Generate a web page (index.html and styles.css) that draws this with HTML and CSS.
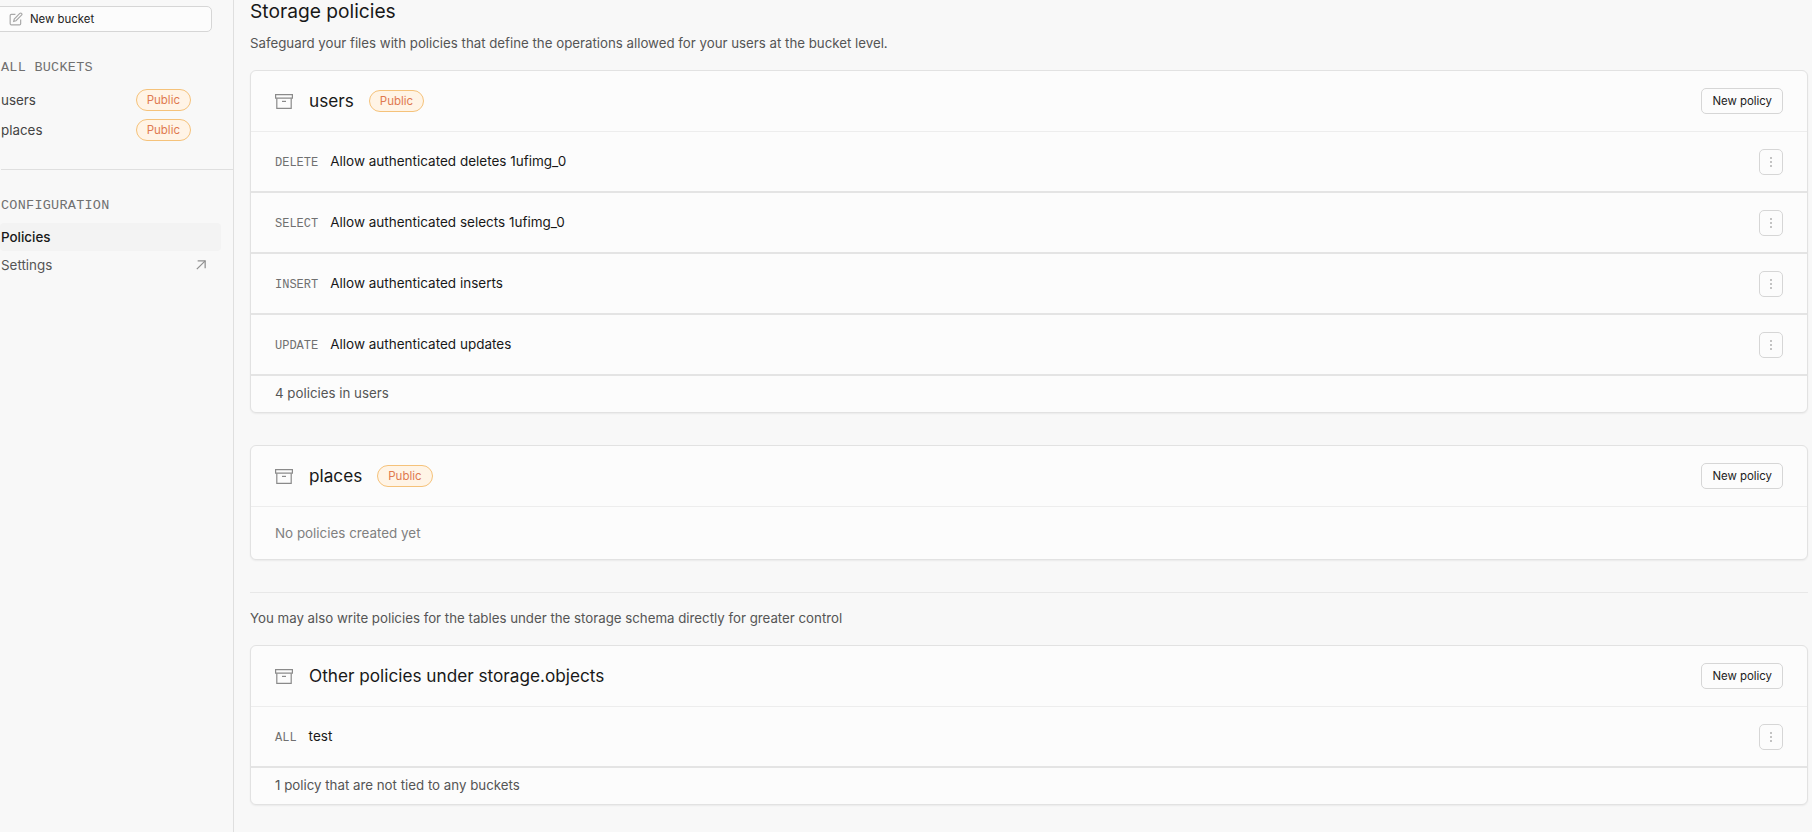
FILE: index.html
```html
<!DOCTYPE html>
<html lang="en">
<head>
<meta charset="utf-8">
<title>Storage policies</title>
<link rel="stylesheet" href="styles.css">
</head>
<body>
<div class="app">
  <aside class="sidebar">
    <button class="new-bucket">
      <svg class="ico-edit" viewBox="0 0 24 24" width="14" height="14"><path d="M11 4H4a2 2 0 0 0-2 2v14a2 2 0 0 0 2 2h14a2 2 0 0 0 2-2v-7"/><path d="M18.5 2.5a2.12 2.12 0 0 1 3 3L12 15l-4 1 1-4 9.5-9.5z"/></svg>
      <span>New bucket</span>
    </button>
    <div class="side-group buckets">
      <h3 class="side-title">ALL BUCKETS</h3>
      <div class="bucket-row"><span>users</span><span class="badge">Public</span></div>
      <div class="bucket-row"><span>places</span><span class="badge">Public</span></div>
    </div>
    <div class="side-group config">
      <h3 class="side-title">CONFIGURATION</h3>
      <div class="nav-item active">Policies</div>
      <div class="nav-item">Settings
        <svg class="ico-arrow" viewBox="0 0 24 24" width="20" height="20"><path d="M7 17 17 7"/><path d="M8 7h9v9"/></svg>
      </div>
    </div>
  </aside>
  <main class="main">
    <h1 class="title">Storage policies</h1>
    <p class="subtitle">Safeguard your files with policies that define the operations allowed for your users at the bucket level.</p>

    <section class="card">
      <header class="card-head">
        <svg class="ico-box" viewBox="0 0 18 15" width="18" height="15"><path d="M.6.6h16.8v3.6H.6z"/><path d="M1.8 4.2v10.2h14.4V4.2"/><path d="M7 7.4h4"/></svg>
        <span class="card-name">users</span><span class="badge">Public</span>
        <button class="btn">New policy</button>
      </header>
      <div class="row"><code class="op">DELETE</code><span class="pname">Allow authenticated deletes 1ufimg_0</span><button class="more"><svg viewBox="0 0 4 14" width="4" height="14"><circle cx="2" cy="3" r="1"/><circle cx="2" cy="7" r="1"/><circle cx="2" cy="11" r="1"/></svg></button></div>
      <div class="row"><code class="op">SELECT</code><span class="pname">Allow authenticated selects 1ufimg_0</span><button class="more"><svg viewBox="0 0 4 14" width="4" height="14"><circle cx="2" cy="3" r="1"/><circle cx="2" cy="7" r="1"/><circle cx="2" cy="11" r="1"/></svg></button></div>
      <div class="row"><code class="op">INSERT</code><span class="pname">Allow authenticated inserts</span><button class="more"><svg viewBox="0 0 4 14" width="4" height="14"><circle cx="2" cy="3" r="1"/><circle cx="2" cy="7" r="1"/><circle cx="2" cy="11" r="1"/></svg></button></div>
      <div class="row"><code class="op">UPDATE</code><span class="pname">Allow authenticated updates</span><button class="more"><svg viewBox="0 0 4 14" width="4" height="14"><circle cx="2" cy="3" r="1"/><circle cx="2" cy="7" r="1"/><circle cx="2" cy="11" r="1"/></svg></button></div>
      <footer class="card-foot">4 policies in users</footer>
    </section>

    <section class="card second">
      <header class="card-head">
        <svg class="ico-box" viewBox="0 0 18 15" width="18" height="15"><path d="M.6.6h16.8v3.6H.6z"/><path d="M1.8 4.2v10.2h14.4V4.2"/><path d="M7 7.4h4"/></svg>
        <span class="card-name">places</span><span class="badge">Public</span>
        <button class="btn">New policy</button>
      </header>
      <div class="empty">No policies created yet</div>
    </section>

    <hr class="divider">
    <p class="note">You may also write policies for the tables under the storage schema directly for greater control</p>

    <section class="card third">
      <header class="card-head">
        <svg class="ico-box" viewBox="0 0 18 15" width="18" height="15"><path d="M.6.6h16.8v3.6H.6z"/><path d="M1.8 4.2v10.2h14.4V4.2"/><path d="M7 7.4h4"/></svg>
        <span class="card-name">Other policies under storage.objects</span>
        <button class="btn">New policy</button>
      </header>
      <div class="row"><code class="op">ALL</code><span class="pname">test</span><button class="more"><svg viewBox="0 0 4 14" width="4" height="14"><circle cx="2" cy="3" r="1"/><circle cx="2" cy="7" r="1"/><circle cx="2" cy="11" r="1"/></svg></button></div>
      <footer class="card-foot">1 policy that are not tied to any buckets</footer>
    </section>
  </main>
</div>
</body>
</html>
```
FILE: styles.css
```css
* { box-sizing: border-box; }
html, body { margin: 0; height: 100%; overflow: hidden; }
body { background: #f8f8f8; font-family: "Inter", "Liberation Sans", sans-serif; color: #181818; font-size: 13.4px; }
.app { display: flex; height: 832px; }
.sidebar { width: 234px; flex: none; border-right: 1px solid #dfdfdf; padding: 6px 0 0 1px; overflow: hidden; }
.new-bucket { display: flex; align-items: center; gap: 7px; width: 217px; height: 26px; margin-left: -6px; padding: 0 0 0 13px; background: #fcfcfc; border: 1px solid #d6d6d6; border-radius: 5px; font: inherit; font-size: 11.4px; color: #222; }
.ico-edit { fill: none; stroke: #a8a8a8; stroke-width: 2; }
.side-group { display: flex; flex-direction: column; }
.side-title { margin: 0; font: 400 13.5px/16px "Liberation Mono", monospace; color: #707070; letter-spacing: .25px; }
.buckets { padding-top: 28px; padding-bottom: 24px; border-bottom: 1px solid #dfdfdf; }
.buckets .side-title { margin-bottom: 9px; }
.bucket-row { display: flex; align-items: center; justify-content: space-between; width: 190px; height: 30px; color: #444; }
.badge { display: inline-flex; align-items: center; height: 22px; padding: 0 10px; border: 1px solid #f5c27a; border-radius: 11px; background: #fff4e6; color: #e0794f; font-size: 11.5px; }
.config { padding-top: 28px; }
.config .side-title { margin-bottom: 9px; }
.nav-item { display: flex; align-items: center; justify-content: space-between; width: 220px; height: 28px; padding-right: 10px; color: #555; }
.nav-item.active { background: #f3f3f3; color: #181818; font-weight: 500; border-radius: 4px; margin-left: -1px; padding-left: 1px; width: 221px; }
.ico-arrow { fill: none; stroke: #909090; stroke-width: 1.5; }
.main { flex: 1; min-width: 0; padding: 0 4px 0 16px; }
.title { margin: 0; font-size: 19.2px; font-weight: 400; line-height: 22px; color: #181818; }
.subtitle { margin: 11px 0 0; font-size: 13.28px; line-height: 20px; color: #555; }
.note { margin: 15px 0 0; font-size: 13.28px; line-height: 20px; color: #555; }
.card { margin-top: 17px; background: #fcfcfc; border: 1px solid #e2e2e2; border-radius: 6px; box-shadow: 0 1px 2px rgba(0,0,0,.06); }
.card.second { margin-top: 32px; }
.card.third { margin-top: 17px; }
.card-head { display: flex; align-items: center; height: 61px; padding: 0 24px; border-bottom: 1px solid #ededed; }
.ico-box { fill: none; stroke: #8a8a8a; stroke-width: 1.2; flex: none; margin-right: 16px; }
.card-name { font-size: 17.2px; color: #181818; margin-right: 15px; padding-bottom: 2px; }
.btn { margin-left: auto; height: 26px; padding: 0 10px; background: #fcfcfc; border: 1px solid #d6d6d6; border-radius: 5px; font: inherit; font-size: 11.4px; color: #222; }
.row { display: flex; align-items: center; height: 61px; padding: 0 24px; border-bottom: 2px solid #e4e4e4; }
.op { font: 400 12px "Liberation Mono", monospace; color: #707070; margin-right: 12px; padding-top: 2px; }
.pname { font-size: 13.5px; color: #181818; padding-bottom: 1px; }
.more { margin-left: auto; width: 24px; height: 26px; display: flex; align-items: center; justify-content: center; padding: 0; background: #fcfcfc; border: 1px solid #d6d6d6; border-radius: 5px; }
.more svg { fill: #b0b0b0; }
.card-foot { height: 36px; display: flex; align-items: center; padding: 0 24px 2px; color: #555; font-size: 13.3px; }
.empty { height: 52px; display: flex; align-items: center; padding: 0 24px 1px; color: #808080; }
.divider { margin: 32px 0 0; border: 0; border-top: 1px solid #e8e8e8; }
```
